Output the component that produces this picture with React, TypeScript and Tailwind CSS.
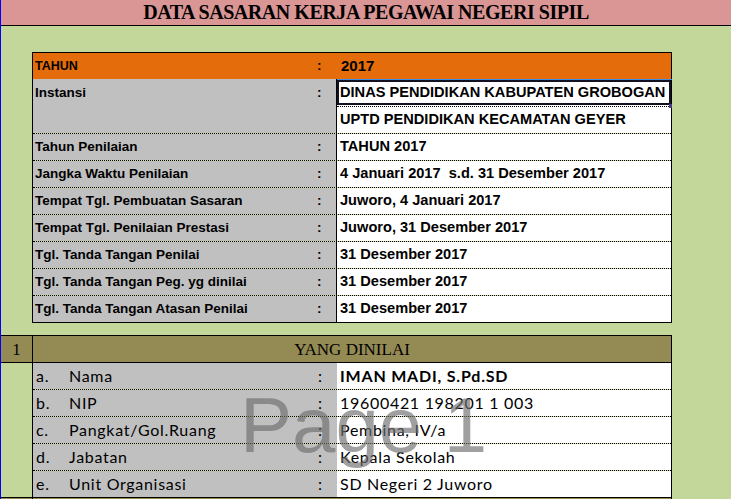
import React from "react";

const arial = "font-['Liberation_Sans',Arial,sans-serif]";
const calibri = "font-['Lato','Open_Sans',sans-serif]";
const serif = "font-['Liberation_Serif','Times_New_Roman',serif]";

const rows1: [string, string][] = [
  ["Tahun Penilaian", "TAHUN 2017"],
  ["Jangka Waktu Penilaian", "4 Januari 2017  s.d. 31 Desember 2017"],
  ["Tempat Tgl. Pembuatan Sasaran", "Juworo, 4 Januari 2017"],
  ["Tempat Tgl. Penilaian Prestasi", "Juworo, 31 Desember 2017"],
  ["Tgl. Tanda Tangan Penilai", "31 Desember 2017"],
  ["Tgl. Tanda Tangan Peg. yg dinilai", "31 Desember 2017"],
];

const rows2: { k: string; label: string; value: string; bold?: boolean }[] = [
  { k: "a.", label: "Nama", value: "IMAN MADI, S.Pd.SD", bold: true },
  { k: "b.", label: "NIP", value: "19600421 198201 1 003" },
  { k: "c.", label: "Pangkat/Gol.Ruang", value: "Pembina, IV/a" },
  { k: "d.", label: "Jabatan", value: "Kepala Sekolah" },
  { k: "e.", label: "Unit Organisasi", value: "SD Negeri 2 Juworo" },
];

function Row1({ label, value, last }: { label: string; value: string; last?: boolean }) {
  return (
    <div className={last ? "flex h-[26px]" : "flex h-[27px] border-b border-dotted border-black"}>
      <div className={`w-[303px] bg-[#c0c0c0] flex pl-[2px] text-[13.5px] font-bold leading-[26px] text-black ${arial}`}>
        <span className="flex-1 whitespace-nowrap">{label}</span>
        <span className="w-[19px]">:</span>
      </div>
      <div className={`flex-1 border-l border-black bg-white pl-[3px] text-[14.6px] font-bold leading-[24px] whitespace-pre text-black ${arial}`}>
        {value}
      </div>
    </div>
  );
}

export default function App() {
  return (
    <div className="relative w-[731px] h-[499px] overflow-hidden bg-[#c4d79b] border-l border-[#0000ff]">
      {/* Title */}
      <div className="h-[26px] bg-[#da9694] border-b border-black text-center">
        <span className={`${serif} font-bold text-[20px] leading-[24px] tracking-[-0.45px] text-black`}>
          DATA SASARAN KERJA PEGAWAI NEGERI SIPIL
        </span>
      </div>

      {/* Table 1 */}
      <div className="ml-[31px] mt-[26px] w-[640px] border border-black">
        <div className="flex h-[26px] bg-[#e46c0a]">
          <div className={`w-[303px] flex pl-[2px] text-[12.5px] font-bold leading-[26px] ${arial}`}>
            <span className="flex-1">TAHUN</span>
            <span className="w-[19px] text-[13.5px]">:</span>
          </div>
          <div className={`flex-1 pl-[5px] text-[15px] font-bold leading-[25px] ${arial}`}>2017</div>
        </div>

        <div className="flex h-[55px] border-b border-dotted border-black">
          <div className={`w-[303px] bg-[#c0c0c0] flex items-start pl-[2px] text-[13.5px] font-bold leading-[27px] ${arial}`}>
            <span className="flex-1">Instansi</span>
            <span className="w-[19px]">:</span>
          </div>
          <div className="flex-1 flex flex-col border-l border-black bg-white">
            <div className={`relative h-[28px] border-b border-dotted border-black pl-[3px] text-[14.6px] font-bold leading-[27px] whitespace-nowrap ${arial}`}>
              DINAS PENDIDIKAN KABUPATEN GROBOGAN
              <div className="absolute left-0 right-[-1px] top-0 h-px bg-[#3d8fe6]" />
              <div className="absolute left-0 right-0 top-[1px] bottom-[1px] border-2 border-[#111122]" />
              <div className="absolute right-[-1px] bottom-[-2px] w-[3px] h-[4px] bg-[#4b3a87]" />
            </div>
            <div className={`h-[26px] pl-[3px] text-[14.6px] font-bold leading-[24px] whitespace-nowrap ${arial}`}>
              UPTD PENDIDIKAN KECAMATAN GEYER
            </div>
          </div>
        </div>

        {rows1.map(([l, v]) => (
          <Row1 key={l} label={l} value={v} />
        ))}
        <Row1 label="Tgl. Tanda Tangan Atasan Penilai" value="31 Desember 2017" last />
      </div>

      {/* Table 2 */}
      <div className="mt-[12px] w-[671px] border-t border-r border-black">
        <div className="flex h-[27px] border-b border-black bg-[#948a54]">
          <div className={`w-[32px] border-r border-black text-center text-[17px] leading-[26px] pt-[1px] ${serif}`}>1</div>
          <div className={`flex-1 text-center text-[17px] leading-[26px] pt-[1px] ${serif}`}>YANG DINILAI</div>
        </div>
        <div className="flex border-b border-black">
          <div className="w-[32px] border-r border-black" />
          <div className="flex-1 flex flex-col">
            {rows2.map((r, i) => (
              <div
                key={r.k}
                className={i < rows2.length - 1 ? "flex h-[27px] border-b border-dotted border-black" : "flex h-[26px]"}
              >
                <div className={`w-[304px] bg-[#c0c0c0] flex pl-[3px] text-[16px] leading-[26px] tracking-[0.7px] text-black ${calibri}`}>
                  <span className="w-[33px]">{r.k}</span>
                  <span className="flex-1 whitespace-nowrap">{r.label}</span>
                  <span className="w-[19px] tracking-normal">:</span>
                </div>
                <div
                  className={`flex-1 bg-white pl-[3px] text-[16px] leading-[26px] whitespace-nowrap text-black ${calibri} ${
                    r.bold ? "font-bold tracking-[0.8px]" : "tracking-[0.7px]"
                  }`}
                >
                  {r.value}
                </div>
              </div>
            ))}
          </div>
        </div>
        <div className="flex h-[27px] bg-[#948a54]">
          <div className="w-[32px] border-r border-black" />
          <div className="flex-1" />
        </div>
      </div>

      {/* Watermark */}
      <div
        className={`pointer-events-none absolute left-[239px] top-[386px] text-[78px] leading-none whitespace-nowrap text-[rgba(109,109,109,0.65)] ${arial}`}
      >
        Page 1
      </div>
    </div>
  );
}
